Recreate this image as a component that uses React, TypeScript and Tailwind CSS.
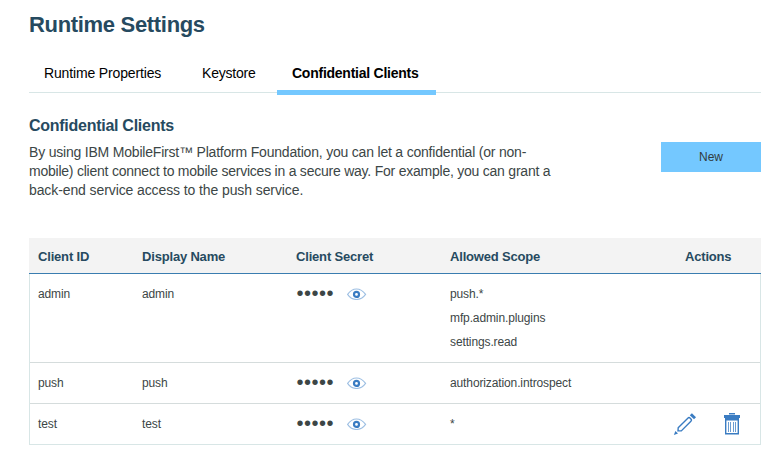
import React from "react";

type Client = { id: string; name: string; scopes: string[]; editable?: boolean };

const clients: Client[] = [
  { id: "admin", name: "admin", scopes: ["push.*", "mfp.admin.plugins", "settings.read"] },
  { id: "push", name: "push", scopes: ["authorization.introspect"] },
  { id: "test", name: "test", scopes: ["*"], editable: true },
];

const columns = "grid grid-cols-[104px_154px_154px_235px_1fr]";

function EyeIcon() {
  return (
    <svg width="20" height="12" viewBox="0 0 20 12" fill="none">
      <path d="M0.6 6.4C3 2.8 6 1 9.5 1S16 2.8 18.6 6.4C16 10 13 11.5 9.5 11.5S3 10 0.6 6.4Z" stroke="#9dbfe3" strokeWidth="1.1" />
      <circle cx="9.5" cy="6.4" r="2.5" stroke="#3a7cc2" strokeWidth="2.2" />
    </svg>
  );
}

function PencilIcon() {
  return (
    <svg width="24" height="24" viewBox="0 0 24 24" fill="none">
      <path d="M5.2 15.8L14.8 6.2Q16 5 17.2 6.2L17.9 6.9Q19.1 8.1 17.9 9.3L8.3 18.9L5 18.9Z" stroke="#3a7cc2" strokeWidth="1.4" />
      <path d="M16.8 3.2L18.9 1.2L23 5.2L21 7.3Z" fill="#3a7cc2" />
      <path d="M2.4 19L5 21.4L0.9 23Z" fill="#3a7cc2" />
    </svg>
  );
}

function TrashIcon() {
  return (
    <svg width="16" height="22" viewBox="0 0 16 22" fill="none">
      <path d="M5 0H11V1.5H5Z" fill="#3a7cc2" />
      <path d="M0 2H16V5H15V7.5H1V5H0Z" fill="#3a7cc2" />
      <path d="M1.7 6V20.8H14.3V6" stroke="#3a7cc2" strokeWidth="1.4" />
      <path d="M4.5 9V19M6.5 9V19M9.5 9V19M11.5 9V19" stroke="#6b9dd2" strokeWidth="1" />
    </svg>
  );
}

export default function App() {
  return (
    <main className="h-[464px] w-[779px] overflow-hidden bg-white pl-[29px] pr-[18px] pt-[11px] font-['Liberation_Sans',Arial,sans-serif] text-[#3c4646]">
      <h1 className="h-[28px] text-[22px] font-bold leading-[28px] tracking-[-0.32px] text-[#264a60]">Runtime Settings</h1>
      <nav className="mt-[13px] flex h-[41px] border-b border-[#d8e6e6] text-[14px] leading-[42px] text-black">
        <a className="w-[158px] pl-[15px] tracking-[-0.15px]">Runtime Properties</a>
        <a className="w-[90px] pl-[15px] tracking-[-0.2px]">Keystore</a>
        <a className="h-[43px] w-[159px] border-b-[5px] border-[#74c8ff] pl-[15px] font-bold tracking-[-0.25px]">Confidential Clients</a>
      </nav>
      <section className="flex h-[145px] items-start justify-between pt-[23px]">
        <div>
          <h2 className="text-[16px] font-bold leading-[20px] tracking-[-0.27px] text-[#264a60]">Confidential Clients</h2>
          <p className="mt-[7px] text-[14px] leading-[19px]">
            <span className="tracking-[-0.2px]">By using IBM MobileFirst™ Platform Foundation, you can let a confidential (or non-</span>
            <br />
            <span className="tracking-[-0.23px]">mobile) client connect to mobile services in a secure way. For example, you can grant a</span>
            <br />
            <span className="tracking-[-0.1px]">back-end service access to the push service.</span>
          </p>
        </div>
        <button className="mt-[26px] h-[30px] w-[100px] bg-[#74c8ff] text-[12px] leading-[30px] text-[#323c40]">New</button>
      </section>
      <section>
        <header className={`${columns} h-[36px] border-b border-[#3a7db0] bg-[#f3f3f3] pl-[9px] text-[13px] font-bold leading-[37px] tracking-[-0.18px] text-[#264a60]`}>
          <span>Client ID</span>
          <span>Display Name</span>
          <span>Client Secret</span>
          <span>Allowed Scope</span>
          <span>Actions</span>
        </header>
        <div className="divide-y divide-[#d5dcdc] border-x border-b border-x-[#d8e6e6] border-b-[#d8e6e6] text-[12px] tracking-[-0.12px]">
          {clients.map((client) => (
            <div key={client.id} className={`${columns} pb-[8px] pl-[8px] pt-[8px] leading-[24px]`}>
              <span>{client.id}</span>
              <span>{client.name}</span>
              <span className="flex h-[24px] items-center">
                <span className="w-[51px] pb-[2px] pl-[0.5px] text-[20px] leading-[24px] tracking-[0.5px]">•••••</span>
                <EyeIcon />
              </span>
              <span className="flex flex-col">
                {client.scopes.map((scope) => (
                  <span key={scope}>{scope}</span>
                ))}
              </span>
              <span className="-ml-[12px] flex h-[24px] items-center gap-[27px]">
                {client.editable && (
                  <>
                    <PencilIcon />
                    <TrashIcon />
                  </>
                )}
              </span>
            </div>
          ))}
        </div>
      </section>
    </main>
  );
}
